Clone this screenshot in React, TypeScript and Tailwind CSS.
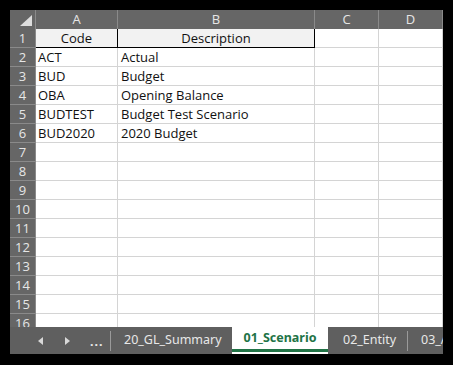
import React from 'react';

const rows: [string, string][] = [
  ['ACT', 'Actual'],
  ['BUD', 'Budget'],
  ['OBA', 'Opening Balance'],
  ['BUDTEST', 'Budget Test Scenario'],
  ['BUD2020', '2020 Budget'],
];

const cellFont = { fontFamily: '"Open Sans", "Noto Sans", sans-serif' };

const App = () => {
  const body = Array.from({ length: 16 }, (_, i) => i + 1);

  return (
    <div className="w-[453px] h-[365px] bg-black pl-[10px] pt-[10px] overflow-hidden">
      <div className="w-[433px] flex flex-col">
        {/* grid */}
        <div className="h-[317px] shrink-0 overflow-hidden bg-white text-[13px] leading-none" style={cellFont}>
          {/* column headers */}
          <div className="flex h-[19px] bg-[#666666] text-[#e6e6e6]">
            <div className="w-[26px] h-full border-r border-[#8a8a8a] relative">
              <div className="absolute right-[3px] bottom-[3px] w-0 h-0 border-l-[12px] border-l-transparent border-b-[11px] border-b-[#dedede]" />
            </div>
            {[
              ['A', 'w-[82px]'],
              ['B', 'w-[197px]'],
              ['C', 'w-[64px]'],
              ['D', 'w-[64px]'],
            ].map(([l, w]) => (
              <div key={l} className={`${w} h-full border-r border-[#8a8a8a] flex items-center justify-center`}>
                {l}
              </div>
            ))}
          </div>
          {body.map((n) => {
            const data = n >= 2 && n <= 6 ? rows[n - 2] : null;
            const head = n === 1;
            return (
              <div key={n} className="flex h-[19px]">
                <div className="w-[26px] h-full bg-[#666666] text-[#e6e6e6] border-b border-r border-[#8a8a8a] flex items-center justify-center">
                  {n}
                </div>
                <div
                  className={
                    head
                      ? 'w-[82px] h-full bg-[#f2f2f2] border-b border-r border-black flex items-center justify-center text-[#111]'
                      : 'w-[82px] h-full border-b border-r border-[#d4d4d4] flex items-center pl-[2px] text-[#111]'
                  }
                >
                  {head ? 'Code' : data?.[0]}
                </div>
                <div
                  className={
                    head
                      ? 'w-[197px] h-full bg-[#f2f2f2] border-b border-r border-black flex items-center justify-center text-[#111]'
                      : 'w-[197px] h-full border-b border-r border-[#d4d4d4] flex items-center pl-[3px] text-[#111]'
                  }
                >
                  {head ? 'Description' : data?.[1]}
                </div>
                <div className="w-[64px] h-full border-b border-r border-[#d4d4d4]" />
                <div className="w-[64px] h-full border-b border-r border-[#d4d4d4]" />
              </div>
            );
          })}
        </div>

        {/* sheet tabs */}
        <div
          className="w-[433px] min-w-0 h-[27px] shrink-0 bg-[#5f5f5f] flex items-center text-[12.5px] text-[#e8e8e8] whitespace-nowrap overflow-hidden"
          style={{ fontFamily: '"Noto Sans", "Open Sans", sans-serif' }}
        >
          <div className="w-[100px] shrink-0 flex items-center h-full">
            <span className="ml-[28px] w-0 h-0 border-y-[4px] border-y-transparent border-r-[5px] border-r-[#d8d8d8]" />
            <span className="ml-[22px] w-0 h-0 border-y-[4px] border-y-transparent border-l-[5px] border-l-[#d8d8d8]" />
            <span className="ml-[20px] tracking-[1px] text-[#e8e8e8] font-bold leading-none pt-[4px]">...</span>
          </div>
          <div className="w-px shrink-0 h-[20px] bg-[#9a9a9a]" />
          <div className="w-[121px] shrink-0 h-full flex items-center pl-[13px]">20_GL_Summary</div>
          <div className="w-[96px] shrink-0 h-full bg-white flex flex-col">
            <div className="flex-1 flex items-center justify-center font-bold text-[#217346]">01_Scenario</div>
            <div className="h-[3px] bg-[#217346] mb-[2px]" />
          </div>
          <div className="w-[79px] shrink-0 h-full flex items-center pl-[15px]">02_Entity</div>
          <div className="w-px shrink-0 h-[20px] bg-[#9a9a9a]" />
          <div className="shrink-0 h-full flex items-center pl-[13px]">03_Account</div>
        </div>
      </div>
    </div>
  );
};

export default App;
